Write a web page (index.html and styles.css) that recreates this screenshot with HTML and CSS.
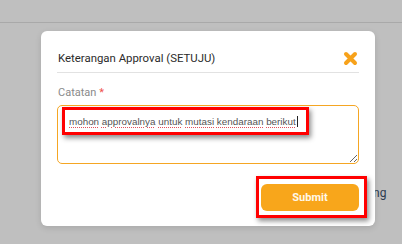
FILE: index.html
```html
<!DOCTYPE html>
<html>
<head>
<meta charset="utf-8" />
<title>Keterangan Approval</title>
<link rel="stylesheet" href="styles.css">
</head>
<body>
<div class="page">
  <div class="topbar"></div>
  <span class="behind">ng</span>
</div>

<div class="overlay">
  <div class="modal">
    <div class="modal_head">
      <span class="modal_title">Keterangan Approval (SETUJU)</span>
      <svg class="close" width="15" height="15" viewBox="0 0 15 15">
        <path d="M3 3 L12 12 M12 3 L3 12" stroke="#f7a21b" stroke-width="4" stroke-linecap="round" />
      </svg>
    </div>
    <div class="modal_body">
      <div class="label">Catatan <span class="req">*</span></div>
      <div class="textarea">
        <span class="sp">mohon</span> <span class="sp">approvalnya</span> <span class="sp">untuk</span> <span class="sp">mutasi</span> <span class="sp">kendaraan</span> <span class="sp caret">berikut</span>
        <div class="mark text_mark"></div>
      </div>
    </div>
    <div class="modal_foot">
      <button class="submit" type="button">Submit</button>
      <div class="mark btn_mark"></div>
    </div>
  </div>
</div>
</body>
</html>
```

FILE: styles.css
```css
html, body { margin: 0; padding: 0; }
body { background: #bfbfbf; font-family: Roboto, "Noto Sans", sans-serif; width: 402px; height: 244px; overflow: hidden; position: relative; }

.page { height: 244px; }
.topbar { height: 22px; border-bottom: 1px solid #a9a9a9; }
.behind { position: absolute; left: 373px; top: 186px; font-size: 12px; color: #2c3b4f; }

.overlay { position: absolute; left: 0; top: 0; right: 0; bottom: 0; }
.modal { margin: 31px 0 0 41px; width: 334px; height: 195px; box-sizing: border-box; background: #fff; border-radius: 6px; box-shadow: 0 2px 6px rgba(0,0,0,0.12); padding: 0 16px; }

.modal_head { display: flex; justify-content: space-between; align-items: center; padding: 16px 0 4px 1px; border-bottom: 1px solid #e2e2e2; height: 21px; }
.modal_title { font-size: 11.4px; color: #2b2b2b; }
.close { margin-right: 1px; margin-top: 2px; }

.modal_body { padding-top: 13px; }
.label { font-size: 11px; color: #8a8a8a; padding-left: 1px; height: 19px; }
.req { color: #f0524f; }

.textarea { position: relative; border: 1px solid #f5a623; border-radius: 5px; padding: 10px 8px 0 11px; box-sizing: border-box; height: 59px; font-family: "Liberation Sans", sans-serif; font-size: 9.85px; color: #555; resize: vertical; overflow: auto; white-space: nowrap; }
.sp { text-decoration: underline dotted #e2505a; text-underline-offset: 2px; }
.caret { border-right: 1px solid #222; padding-right: 1px; }

.mark { position: absolute; border: 3px solid #ff0000; box-shadow: 2px 3px 5px rgba(0,0,0,0.45); pointer-events: none; }
.text_mark { left: 4px; top: 1px; width: 241px; height: 22px; }

.modal_foot { position: relative; display: flex; justify-content: flex-end; padding-top: 20px; }
.submit { width: 98px; height: 27px; border: 0; border-radius: 6px; background: #f8a61b; color: #fff8ea; font-family: Roboto, sans-serif; font-weight: bold; font-size: 11px; }
.btn_mark { right: -8px; top: 12px; width: 105px; height: 36px; }
```
